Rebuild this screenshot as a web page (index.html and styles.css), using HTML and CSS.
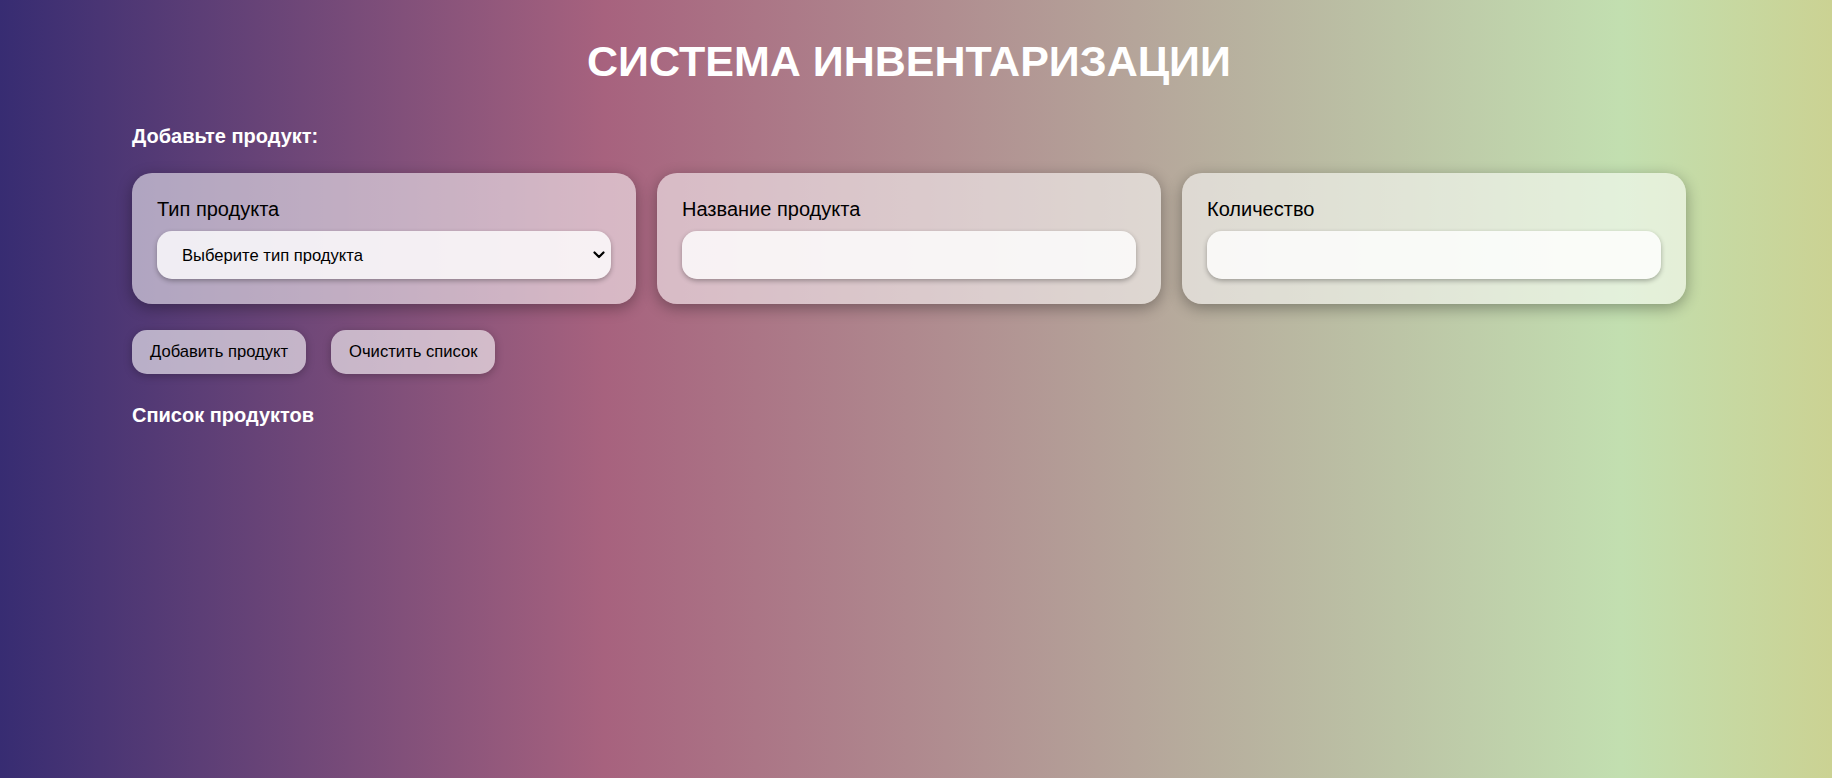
FILE: index.html
```html
<!DOCTYPE html>
<html lang="ru">
<head>
<meta charset="utf-8">
<title>Система инвентаризации</title>
<link rel="stylesheet" href="styles.css">
</head>
<body>
<div class="page">
  <h1 class="title">СИСТЕМА ИНВЕНТАРИЗАЦИИ</h1>
  <h3 class="section-title">Добавьте продукт:</h3>
  <div class="form-grid">
    <div class="card">
      <label class="field-label" for="type">Тип продукта</label>
      <div class="select-wrap">
        <select class="field select" id="type">
          <option>Выберите тип продукта</option>
        </select>
        <svg class="chevron" width="12" height="8" viewBox="0 0 12 8" aria-hidden="true">
          <polyline points="1.5,1.5 6,6 10.5,1.5" fill="none" stroke="#000" stroke-width="2.2" stroke-linecap="round" stroke-linejoin="round"/>
        </svg>
      </div>
    </div>
    <div class="card">
      <label class="field-label" for="name">Название продукта</label>
      <input class="field" id="name" type="text">
    </div>
    <div class="card">
      <label class="field-label" for="qty">Количество</label>
      <input class="field" id="qty" type="number">
    </div>
  </div>
  <div class="actions">
    <button class="btn">Добавить продукт</button>
    <button class="btn">Очистить список</button>
  </div>
  <h3 class="section-title list-title">Список продуктов</h3>
</div>
</body>
</html>
```
FILE: styles.css
```css
html, body {
  margin: 0;
  padding: 0;
}
body {
  min-height: 100vh;
  font-family: "Liberation Sans", Arial, sans-serif;
  background: linear-gradient(90deg, #372c72 0%, #a7627e 33%, #b5a59a 62%, #c2dfb0 88.5%, #cbd293 100%);
  color: #000;
}
.page {
  padding: 37px 146px 40px 132px;
}
.title {
  margin: 0 0 39px;
  font-size: 43px;
  line-height: 49px;
  font-weight: bold;
  color: #fff;
  text-align: center;
}
.section-title {
  margin: 0 0 25px;
  font-size: 20px;
  line-height: 23px;
  font-weight: bold;
  color: #fff;
}
.list-title {
  margin-top: 30px;
}
.form-grid {
  display: grid;
  grid-template-columns: repeat(3, 1fr);
  gap: 21px;
}
.card {
  display: flex;
  flex-direction: column;
  padding: 25px;
  border-radius: 20px;
  background: rgba(255, 255, 255, 0.55);
  box-shadow: 0 4px 15px rgba(0, 0, 0, 0.33);
}
.field-label {
  font-size: 20px;
  line-height: 23px;
  margin-bottom: 10px;
}
.select-wrap {
  position: relative;
}
.field {
  display: block;
  box-sizing: border-box;
  height: 48px;
  width: 100%;
  border: none;
  border-radius: 15px;
  background: rgba(255, 255, 255, 0.8);
  box-shadow: 0 2px 5px rgba(0, 0, 0, 0.3);
  font-family: "Liberation Sans", Arial, sans-serif;
  font-size: 16.6px;
  color: #000;
  padding: 0 12px 0 25px;
  outline: none;
}
.select {
  appearance: none;
  -webkit-appearance: none;
  padding-right: 36px;
}
.chevron {
  position: absolute;
  right: 6px;
  top: 20px;
  pointer-events: none;
}
.actions {
  display: flex;
  gap: 25px;
  margin-top: 26px;
}
.btn {
  height: 44px;
  padding: 0 18px;
  border: none;
  border-radius: 15px;
  background: rgba(255, 255, 255, 0.6);
  box-shadow: 0 2px 8px rgba(0, 0, 0, 0.25);
  font-family: "Liberation Sans", Arial, sans-serif;
  font-size: 16.6px;
  color: #000;
  cursor: pointer;
}
```
